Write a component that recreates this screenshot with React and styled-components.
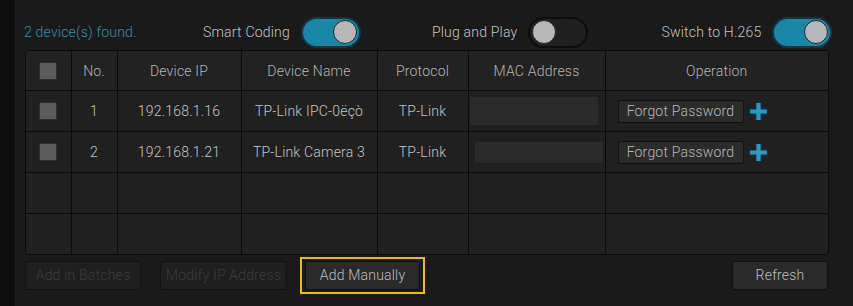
import React from 'react';
import styled, { createGlobalStyle } from 'styled-components';

const GlobalStyle = createGlobalStyle`
  body {
    margin: 0;
    background: #1a1a1a;
    font-family: Roboto, "Liberation Sans", sans-serif;
    font-weight: 300;
    letter-spacing: 0.2px;
  }
`;

const Screen = styled.div`
  display: flex;
  width: 853px;
  height: 306px;
  overflow: hidden;
`;

const SideStrip = styled.div`
  width: 15px;
  flex-shrink: 0;
  background: #0e0e0e;
`;

const Panel = styled.div`
  flex: 1;
  background: #1a1a1a;
  padding: 0 24px 0 10px;
  display: flex;
  flex-direction: column;
`;

const TopBar = styled.div`
  height: 50px;
  display: flex;
  align-items: center;
  padding-top: 14px;
  box-sizing: border-box;
  white-space: nowrap;
`;

const FoundText = styled.span`
  color: #3a8da6;
  font-size: 14px;
  margin-left: -1px;
  width: 179px;
`;

const ToggleGroup = styled.div`
  display: flex;
  align-items: center;
  gap: 11px;
  margin-left: ${p => p.$offset || 0}px;
`;

const ToggleLabel = styled.span`
  color: #c2c2c2;
  font-size: 14px;
`;

const Toggle = styled.div`
  width: 60px;
  height: 31px;
  box-sizing: border-box;
  border-radius: 16px;
  border: 2px solid ${p => (p.$on ? '#0f3745' : '#0d0d0d')};
  background: ${p => (p.$on ? '#1887a7' : '#1f1f1f')};
  display: flex;
  align-items: center;
  justify-content: ${p => (p.$on ? 'flex-end' : 'flex-start')};
  padding: 0 2px;
`;

const Knob = styled.div`
  width: 24px;
  height: 24px;
  border-radius: 50%;
  background: #b7b7b7;
  border: 1px solid #1a2a30;
  box-sizing: border-box;
`;

const TableBox = styled.div`
  width: 804px;
  box-sizing: border-box;
  border: 1px solid #0b0b0b;
  border-radius: 3px;
  overflow: hidden;
  background: #202020;
`;

const Table = styled.table`
  width: 100%;
  border-collapse: collapse;
  table-layout: fixed;
`;

const HeadCell = styled.th`
  height: 39px;
  background: #222222;
  color: #b4b4b4;
  font-size: 14px;
  font-weight: 300;
  text-align: center;
  border-right: 1px solid #0b0b0b;
  border-bottom: 1px solid #0b0b0b;
  padding: 0;
  &:last-child {
    border-right: none;
  }
`;

const Cell = styled.td`
  height: 40px;
  color: #c4c4c4;
  font-size: 14px;
  text-align: center;
  white-space: nowrap;
  border-right: 1px solid #0b0b0b;
  border-bottom: 1px solid #0b0b0b;
  padding: 0;
  &:last-child {
    border-right: none;
  }
  tr:last-child & {
    border-bottom: none;
  }
`;

const Checkbox = styled.div`
  width: 18px;
  height: 18px;
  margin: 0 auto;
  box-sizing: border-box;
  border-radius: 2px;
  background: #5c5c5c;
  border: 1px solid #2e2e2e;
`;

const MacMask = styled.div`
  width: 128px;
  height: ${p => p.$h}px;
  margin-left: ${p => p.$ml}px;
  background: #2a2a2a;
`;

const OpWrap = styled.div`
  display: flex;
  align-items: center;
  padding-left: 12px;
  gap: 4px;
`;

const SmallButton = styled.div`
  height: 23px;
  width: 126px;
  box-sizing: border-box;
  border: 1px solid #111;
  border-radius: 2px;
  background: #2b2b2b;
  color: #b8b8b8;
  font-size: 14px;
  display: flex;
  align-items: center;
  justify-content: center;
`;

const BottomBar = styled.div`
  display: flex;
  align-items: center;
  height: 40px;
  white-space: nowrap;
`;

const Button = styled.div`
  height: 29px;
  box-sizing: border-box;
  border: 1px solid #111;
  border-radius: 2px;
  background: ${p => (p.$disabled ? '#1f1f1f' : '#2a2a2a')};
  color: ${p => (p.$disabled ? '#3c3c3c' : '#bdbdbd')};
  font-size: 14px;
  display: flex;
  align-items: center;
  justify-content: center;
  width: ${p => p.$w}px;
  margin-left: ${p => p.$ml || 0}px;
`;

const Focus = styled.div`
  border: 2px solid #f2bd00;
  padding: 2px 3px;
  margin-left: 13px;
`;

const PlusIcon = () => (
  <svg width="21" height="21" viewBox="0 0 20 20">
    <path
      d="M7.5 1.5h5v6h6v5h-6v6h-5v-6h-6v-5h6z"
      fill="#2a9bc3"
      stroke="#0e2c38"
      strokeWidth="1"
    />
  </svg>
);

const widths = [45, 46, 124, 136, 91, 137, 223];
const headers = ['', 'No.', 'Device IP', 'Device Name', 'Protocol', 'MAC Address', 'Operation'];

const devices = [
  { no: 1, ip: '192.168.1.16', name: 'TP-Link IPC-0ëçò', proto: 'TP-Link', mask: { h: 28, ml: 1 } },
  { no: 2, ip: '192.168.1.21', name: 'TP-Link Camera 3', proto: 'TP-Link', mask: { h: 21, ml: 6 } },
];

export default function App() {
  return (
    <>
      <GlobalStyle />
      <Screen>
        <SideStrip />
        <Panel>
          <TopBar>
            <FoundText>2 device(s) found.</FoundText>
            <ToggleGroup>
              <ToggleLabel>Smart Coding</ToggleLabel>
              <Toggle $on><Knob /></Toggle>
            </ToggleGroup>
            <ToggleGroup $offset={71}>
              <ToggleLabel>Plug and Play</ToggleLabel>
              <Toggle><Knob /></Toggle>
            </ToggleGroup>
            <ToggleGroup $offset={73}>
              <ToggleLabel>Switch to H.265</ToggleLabel>
              <Toggle $on><Knob /></Toggle>
            </ToggleGroup>
          </TopBar>
          <TableBox>
            <Table>
              <colgroup>
                {widths.map((w, i) => <col key={i} style={{ width: w }} />)}
              </colgroup>
              <thead>
                <tr>
                  {headers.map((h, i) => (
                    <HeadCell key={i}>{i === 0 ? <Checkbox /> : h}</HeadCell>
                  ))}
                </tr>
              </thead>
              <tbody>
                {devices.map(d => (
                  <tr key={d.no}>
                    <Cell><Checkbox /></Cell>
                    <Cell>{d.no}</Cell>
                    <Cell>{d.ip}</Cell>
                    <Cell>{d.name}</Cell>
                    <Cell>{d.proto}</Cell>
                    <Cell><MacMask $h={d.mask.h} $ml={d.mask.ml} /></Cell>
                    <Cell>
                      <OpWrap>
                        <SmallButton>Forgot Password</SmallButton>
                        <PlusIcon />
                      </OpWrap>
                    </Cell>
                  </tr>
                ))}
                {[0, 1].map(r => (
                  <tr key={'e' + r}>
                    {widths.map((_, i) => <Cell key={i} />)}
                  </tr>
                ))}
              </tbody>
            </Table>
          </TableBox>
          <BottomBar>
            <Button $disabled $w={116}>Add in Batches</Button>
            <Button $disabled $w={127} $ml={19}>Modify IP Address</Button>
            <Focus>
              <Button $w={115}>Add Manually</Button>
            </Focus>
            <Button $w={96} $ml={307}>Refresh</Button>
          </BottomBar>
        </Panel>
      </Screen>
    </>
  );
}
